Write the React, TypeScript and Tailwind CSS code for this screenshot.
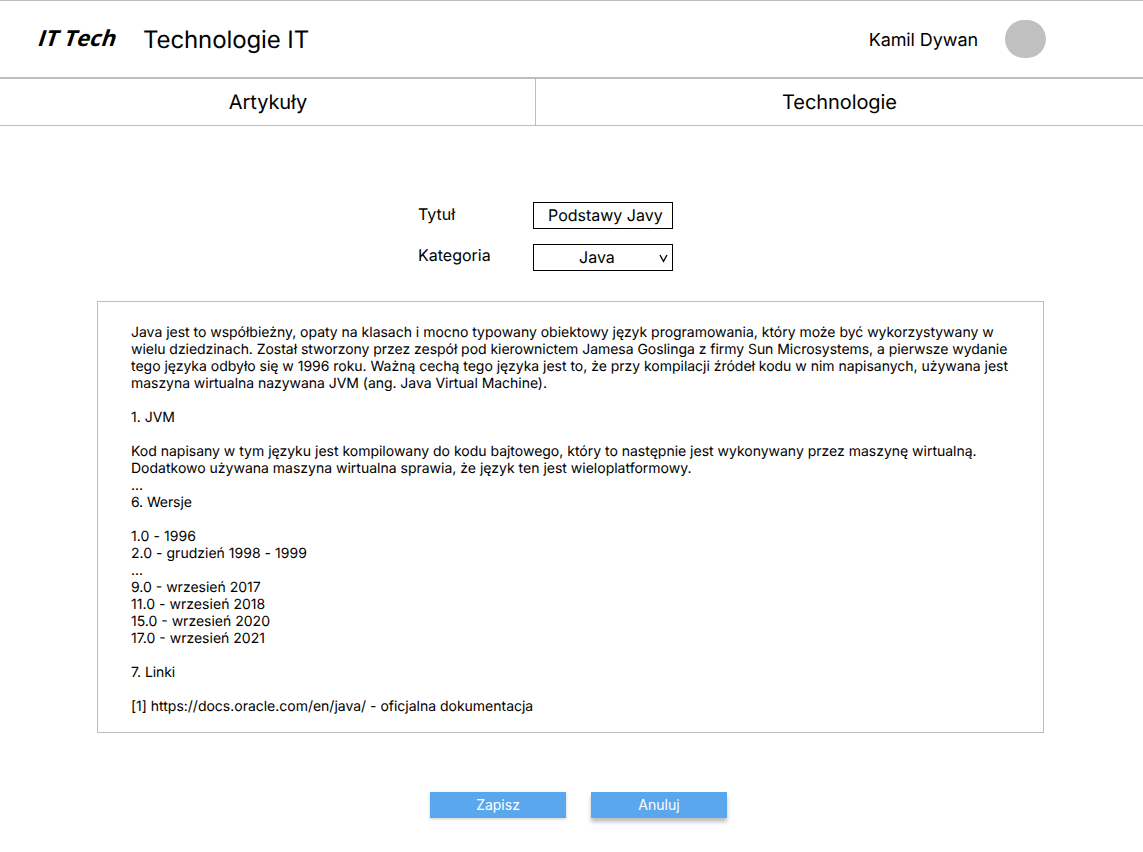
const article: { text: string; tracking?: string }[] = [
  { text: 'Java jest to współbieżny, opaty na klasach i mocno typowany obiektowy język programowania, który może być wykorzystywany w', tracking: 'tracking-[-0.02px]' },
  { text: 'wielu dziedzinach. Został stworzony przez zespół pod kierownictem Jamesa Goslinga z firmy Sun Microsystems, a pierwsze wydanie', tracking: 'tracking-[-0.042px]' },
  { text: 'tego języka odbyło się w 1996 roku. Ważną cechą tego języka jest to, że przy kompilacji źródeł kodu w nim napisanych, używana jest', tracking: 'tracking-[-0.02px]' },
  { text: 'maszyna wirtualna nazywana JVM (ang. Java Virtual Machine).', tracking: 'tracking-[-0.04px]' },
  { text: '' },
  { text: '1. JVM' },
  { text: '' },
  { text: 'Kod napisany w tym języku jest kompilowany do kodu bajtowego, który to następnie jest wykonywany przez maszynę wirtualną.', tracking: 'tracking-[-0.008px]' },
  { text: 'Dodatkowo używana maszyna wirtualna sprawia, że język ten jest wieloplatformowy.' },
  { text: '...' },
  { text: '6. Wersje', tracking: 'tracking-[-0.1px]' },
  { text: '' },
  { text: '1.0 - 1996', tracking: 'tracking-[0.08px]' },
  { text: '2.0 - grudzień 1998 - 1999', tracking: 'tracking-[0.02px]' },
  { text: '...' },
  { text: '9.0 - wrzesień 2017' },
  { text: '11.0 - wrzesień 2018', tracking: 'tracking-[0.04px]' },
  { text: '15.0 - wrzesień 2020' },
  { text: '17.0 - wrzesień 2021' },
  { text: '' },
  { text: '7. Linki', tracking: 'tracking-[-0.08px]' },
  { text: '' },
  { text: '[1] https://docs.oracle.com/en/java/ - oficjalna dokumentacja', tracking: 'tracking-[-0.01px]' },
];

export default function App() {
  return (
    <div className="h-[852px] w-[1143px] overflow-hidden bg-white font-['Inter',sans-serif] text-black [text-rendering:geometricPrecision]">
      <header className="flex h-[79px] items-center border-t border-b-2 border-[#bdbdbd] pl-[38px]">
        <div className="w-[105px] pb-px pl-px font-['Open_Sans',sans-serif] text-[22px] font-bold tracking-[0.1px]"><span className="inline-block -skew-x-[18deg]">IT Tech</span></div>
        <h1 className="pt-[2px] text-2xl tracking-[-0.1px]">Technologie IT</h1>
        <div className="ml-auto pt-[4px] text-lg tracking-[-0.09px]">Kamil Dywan</div>
        <div className="mr-[97px] ml-[27px] h-[38px] w-[41px] rounded-full bg-[#c0c0c0]" />
      </header>
      <nav className="flex h-[47px] border-b border-[#bdbdbd] text-center text-xl leading-[46px] tracking-[-0.08px]">
        <div className="w-[536px] border-r border-[#bdbdbd] pl-px">Artykuły</div>
        <div className="flex-1">Technologie</div>
      </nav>
      <main>
        <div className="mt-[76px] ml-[418px] flex flex-col gap-[15px] text-base">
          <label className="flex h-[27px]">
            <span className="w-[115px] leading-[25px]">Tytuł</span>
            <span className="w-[140px] border border-black pl-[14px] leading-[25px]">Podstawy Javy</span>
          </label>
          <label className="flex h-[27px]">
            <span className="w-[115px] leading-[23px]">Kategoria</span>
            <span className="flex w-[140px] items-center border border-black pl-[45px] leading-[25px]">
              Java
              <svg className="mt-px mr-[4px] ml-auto" width="9" height="9" viewBox="0 0 9 9" fill="none" stroke="black" strokeWidth="1.3"><path d="M1 1L4.5 7.3L8 1" /></svg>
            </span>
          </label>
        </div>
        <article className="mt-[30px] ml-[97px] h-[432px] w-[947px] border border-[#bdbdbd] pt-[22px] pl-[33px] text-sm leading-[17px] whitespace-pre">
          {article.map((line, i) => <p key={i} className={`h-[17px] ${line.tracking ?? ''}`}>{line.text}</p>)}
        </article>
        <div className="mt-[59px] ml-[430px] flex gap-[25px] text-sm text-white">
          <button className="h-[26px] w-[136px] bg-[#5aa7ee] shadow-[0_1px_3px_rgba(0,0,0,0.2)]">Zapisz</button>
          <button className="h-[26px] w-[136px] bg-[#5aa7ee] shadow-[0_4px_4px_rgba(0,0,0,0.25)]">Anuluj</button>
        </div>
      </main>
    </div>
  );
}
